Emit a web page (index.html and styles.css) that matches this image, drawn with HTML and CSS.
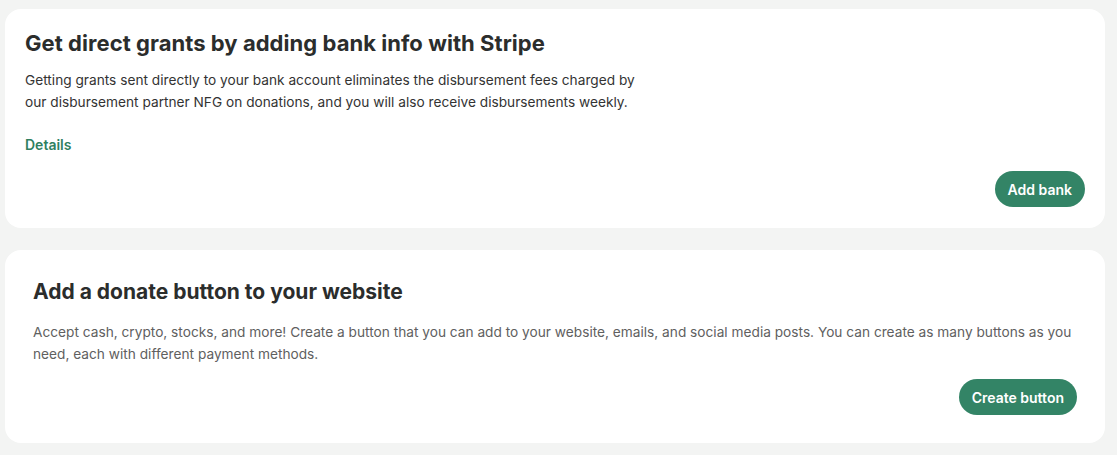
FILE: index.html
```html
<!DOCTYPE html>
<html lang="en">
  <head>
    <meta charset="UTF-8" />
    <meta name="viewport" content="width=device-width, initial-scale=1.0" />
    <title>Grants</title>
    <link rel="stylesheet" href="styles.css">
  </head>
  <body>
    <div class="page">
      <section class="card card-bank">
        <h2>Get direct grants by adding bank info with Stripe</h2>
        <p class="lead">
          Getting grants sent directly to your bank account eliminates the disbursement fees charged by
          our disbursement partner NFG on donations, and you will also receive disbursements weekly.
        </p>
        <a href="#" class="details">Details</a>
        <div class="actions">
          <button type="button">Add bank</button>
        </div>
      </section>

      <section class="card card-donate">
        <h2>Add a donate button to your website</h2>
        <p class="muted">
          Accept cash, crypto, stocks, and more! Create a button that you can add to your website, emails, and social media posts. You can create as many buttons as you need, each with different payment methods.
        </p>
        <div class="actions">
          <button type="button">Create button</button>
        </div>
      </section>
    </div>
  </body>
</html>
```

FILE: styles.css
```css
body {
  font-family: Inter, "Noto Sans", sans-serif;
  margin: 0;
  background-color: #f3f4f3;
  color: #2b2b2b;
}
.page {
  display: flex;
  flex-direction: column;
  gap: 22px;
  padding: 9px 12px 12px 5px;
}
.card {
  background-color: #fff;
  border-radius: 16px;
}
.card-bank {
  padding: 20px 20px 21px;
}
.card-donate {
  padding: 28px;
}
h2 {
  margin: 0;
  font-size: 21px;
  line-height: 28px;
  font-weight: 700;
  color: #2b2d2c;
}
.card-bank h2 {
  font-size: 22px;
  letter-spacing: 0.05px;
}
.lead {
  max-width: 625px;
  margin: 12px 0 0;
  font-size: 13.7px;
  line-height: 22px;
  color: #333;
}
.muted {
  margin: 15px 0 0;
  font-size: 13.7px;
  line-height: 22px;
  color: #606060;
}
.details {
  display: inline-block;
  margin-top: 23px;
  font-size: 14px;
  font-weight: 600;
  color: #2f7f5f;
  text-decoration: none;
}
.actions {
  display: flex;
  justify-content: flex-end;
  margin-top: 17px;
}
.card-donate .actions {
  margin-top: 14px;
}
button {
  height: 36px;
  padding: 0 13px;
  border: none;
  border-radius: 18px;
  background-color: #338466;
  color: #fff;
  font-family: inherit;
  font-size: 14px;
  font-weight: 600;
  cursor: pointer;
}
```
